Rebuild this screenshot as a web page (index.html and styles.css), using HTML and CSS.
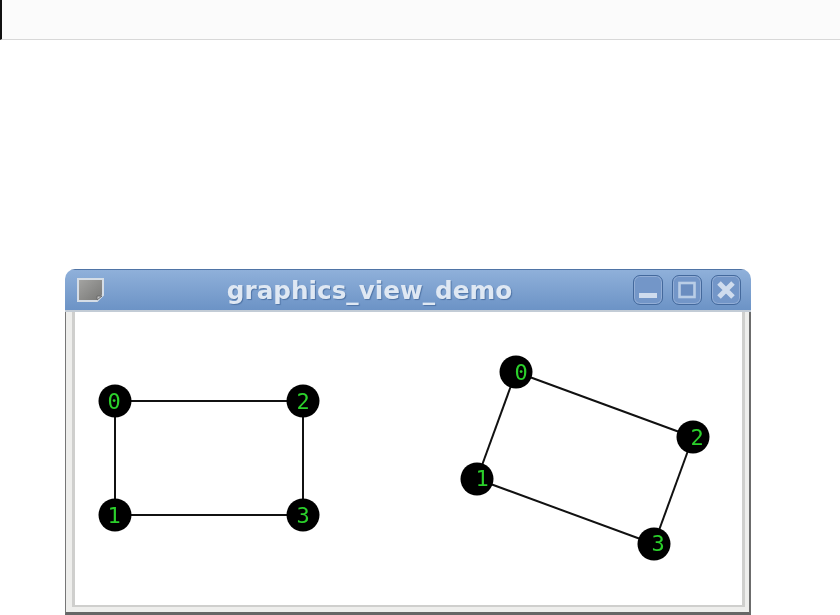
FILE: index.html
```html
<!DOCTYPE html>
<html lang="en">
<head>
<meta charset="UTF-8" />
<title>graphics_view_demo</title>
<link rel="stylesheet" href="styles.css">
</head>
<body>

<div class="topbar"></div>

<div class="window">
  <div class="titlebar">
    <svg class="app-icon" width="30" height="26" viewBox="0 0 30 26">
      <defs>
        <linearGradient id="sheet" x1="0" y1="0" x2="1" y2="1">
          <stop offset="0" stop-color="#a5a5a3" />
          <stop offset="1" stop-color="#767674" />
        </linearGradient>
      </defs>
      <path d="M2 2 H27 V18 L21 24 H2 Z" fill="url(#sheet)" stroke="#d5dde6" stroke-width="2" />
      <path d="M26 19 H21 V23 Z" fill="#c9c9c9" stroke="#6a6a6a" stroke-width="1" />
    </svg>
    <span class="title">graphics_view_demo</span>
    <div class="buttons">
      <div class="wbtn">
        <svg width="28" height="28" viewBox="0 0 28 28"><rect x="5" y="17" width="18" height="5" fill="#cfdcee" /></svg>
      </div>
      <div class="wbtn">
        <svg width="28" height="28" viewBox="0 0 28 28"><rect x="6.5" y="7" width="15" height="14" fill="#6a8dc0" stroke="#b9cde6" stroke-width="2.6" /></svg>
      </div>
      <div class="wbtn">
        <svg width="28" height="28" viewBox="0 0 28 28"><path d="M7 7 L21 21 M21 7 L7 21" stroke="#cfdcee" stroke-width="5" /></svg>
      </div>
    </div>
  </div>
  <div class="frame">
    <div class="canvas">
      <!-- viewBox uses page coordinates so the nodes read as measured -->
      <svg class="scene" width="667" height="293" viewBox="75 312 667 293">
        <g class="edges">
          <line x1="115" y1="401" x2="303" y2="401" />
          <line x1="115" y1="401" x2="115" y2="515" />
          <line x1="303" y1="401" x2="303" y2="515" />
          <line x1="115" y1="515" x2="303" y2="515" />
          <line x1="516" y1="372" x2="693" y2="437" />
          <line x1="516" y1="372" x2="477" y2="479" />
          <line x1="693" y1="437" x2="654" y2="544" />
          <line x1="477" y1="479" x2="654" y2="544" />
        </g>
        <g class="nodes">
          <circle cx="115" cy="401" r="16.5" /><text x="114" y="409">0</text>
          <circle cx="303" cy="401" r="16.5" /><text x="303" y="409">2</text>
          <circle cx="115" cy="515" r="16.5" /><text x="114" y="523">1</text>
          <circle cx="303" cy="515" r="16.5" /><text x="303" y="523">3</text>
          <circle cx="516" cy="372" r="16.5" /><text x="521" y="380">0</text>
          <circle cx="693" cy="437" r="16.5" /><text x="697" y="445">2</text>
          <circle cx="477" cy="479" r="16.5" /><text x="482" y="486">1</text>
          <circle cx="654" cy="544" r="16.5" /><text x="658" y="551">3</text>
        </g>
      </svg>
    </div>
  </div>
</div>

</body>
</html>
```

FILE: styles.css
```css
body {
  margin: 0;
  height: 615px;
  overflow: hidden;
  background: #fff;
  font-family: "DejaVu Sans", sans-serif;
}

.topbar {
  box-sizing: border-box;
  height: 40px;
  background: #fbfbfb;
  border-left: 2px solid #111;
  border-bottom: 1px solid #d8d8d8;
}

.window {
  box-sizing: border-box;
  width: 686px;
  height: 346px;
  margin: 229px 0 0 65px;
  border-radius: 10px 10px 0 0;
  overflow: hidden;
  filter: blur(0.6px);
}

.titlebar {
  box-sizing: border-box;
  height: 43px;
  display: flex;
  align-items: center;
  padding: 0 10px 0 11px;
  background: linear-gradient(#8fb0da, #6c93c6);
  border-top: 1px solid #4f74a6;
  border-bottom: 2px solid #c3ccd6;
}

.app-icon {
  flex: none;
}

.title {
  flex: 1;
  text-align: center;
  font-size: 24.7px;
  font-weight: bold;
  color: #dfe8f3;
  text-shadow: 1px 1px 1px #4f74a6;
}

.buttons {
  display: flex;
  gap: 9px;
}

.wbtn {
  box-sizing: border-box;
  width: 30px;
  height: 30px;
  border: 1px solid #44699c;
  border-radius: 7px;
  background: #7396c8;
  box-shadow: inset 0 0 0 1px #93aed6;
}

.wbtn svg {
  display: block;
}

.frame {
  height: 303px;
  padding: 0 4px 5px 6px;
  box-sizing: border-box;
  background: #eeeeec;
  border-left: 1px solid #777;
  border-right: 2px solid #6c6c6c;
  border-bottom: 3px solid #666;
}

.canvas {
  box-sizing: border-box;
  height: 100%;
  background: #fff;
  border-left: 3px solid #cfcfcd;
  border-right: 3px solid #cfcfcd;
  border-bottom: 2px solid #cfcfcd;
  overflow: hidden;
}

.scene {
  display: block;
}

.edges line {
  stroke: #111;
  stroke-width: 2;
}

.nodes circle {
  fill: #000;
}

.nodes text {
  font-family: "DejaVu Sans Mono", monospace;
  font-size: 22px;
  text-anchor: middle;
  fill: #2bd02b;
}
```
